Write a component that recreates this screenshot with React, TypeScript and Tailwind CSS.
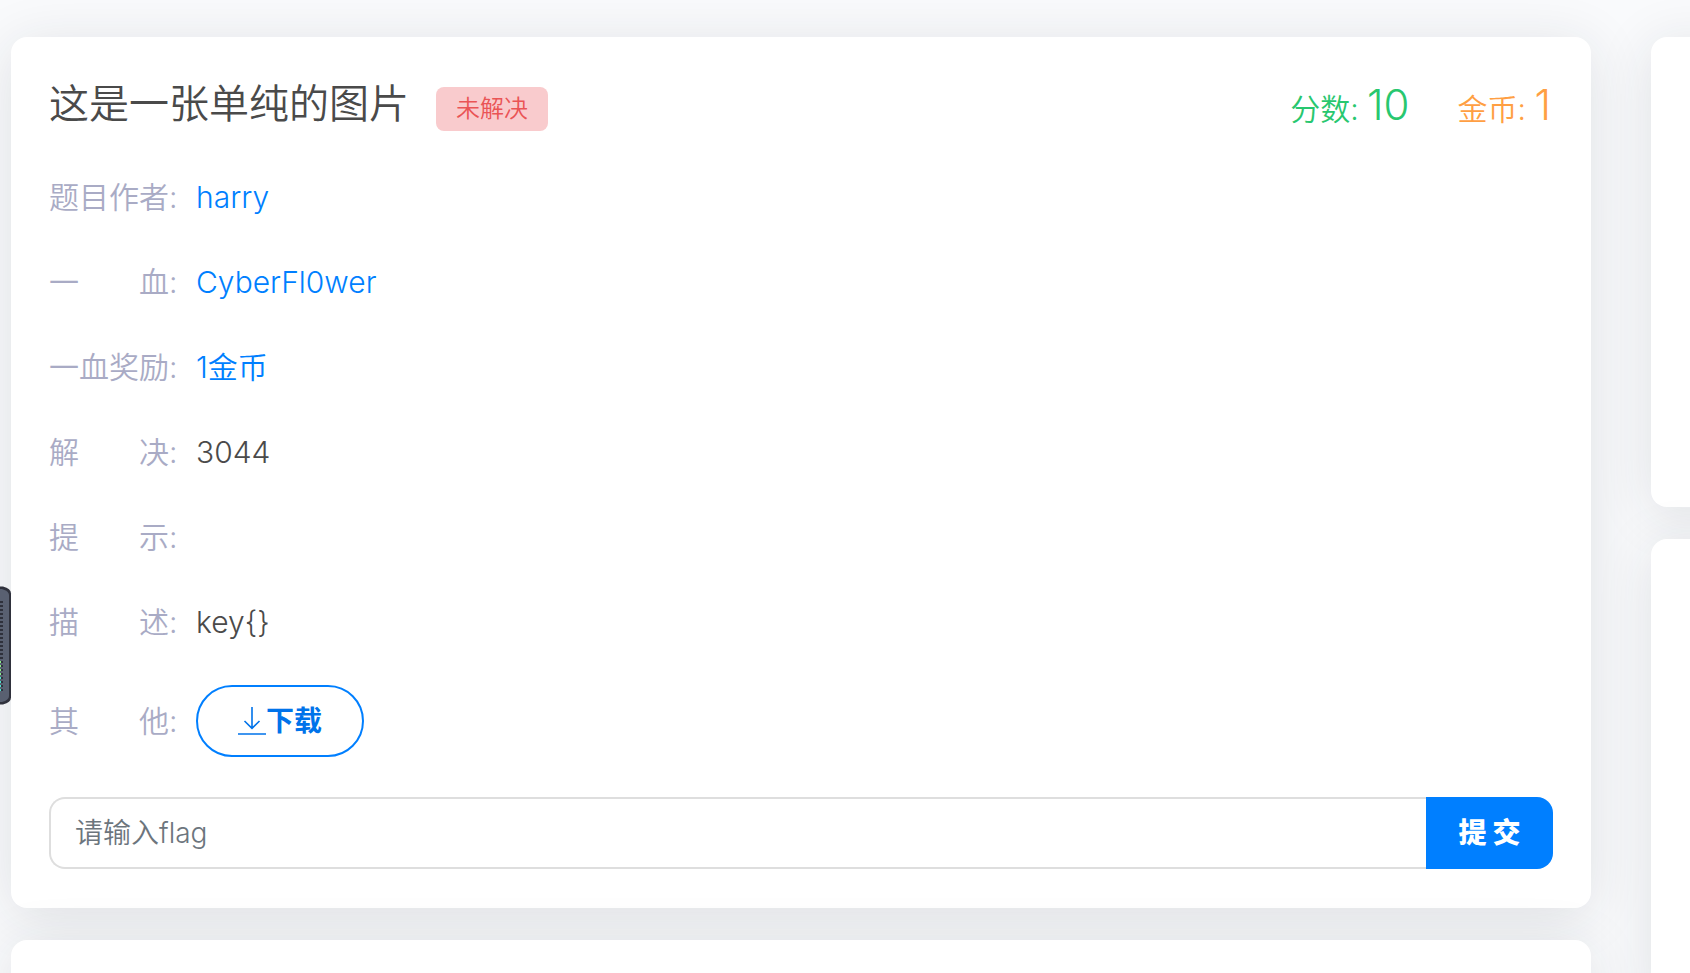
import type { ReactNode } from "react";

const cardClass =
  "rounded-2xl bg-white shadow-[0_8px_56px_rgba(34,41,47,0.12)]";

function Row({ label, children }: { label: string; children?: ReactNode }) {
  return (
    <div className="flex items-center gap-5">
      <dt className="w-[127px] shrink-0 whitespace-pre leading-[45px] text-[#a9abc5]">{label}:</dt>
      <dd className="leading-[45px]">{children}</dd>
    </div>
  );
}

function DownloadIcon() {
  return (
    <svg viewBox="0 0 28 28" className="size-7" fill="none" stroke="currentColor" strokeWidth="1.6" aria-hidden="true">
      <path d="M14 0v21M6.5 14l7.5 7.3 7.5-7.3M0 27h28" />
    </svg>
  );
}

function SideWidget() {
  const ticks = Array.from({ length: 23 }, (_, i) => i);
  return (
    <svg viewBox="0 0 12 120" className="absolute left-0 top-[586px] h-[120px] w-3" aria-hidden="true">
      <path d="M0 .5h3q8 2 8 7v104q0 5-8 7H0z" fill="#2f313c" />
      <path d="M0 3h2q7 2 7 6v101q0 4-7 6H0z" fill="#596071" />
      {ticks.map((i) => (
        <rect key={i} x="0" y={15 + i * 4} width="3" height="2" fill="#2f313c" />
      ))}
      {[0, 1, 2, 3, 4, 5, 6, 7].map((i) => (
        <rect key={i} x="0" y={75 + i * 4} width="1" height="2" fill={i < 4 ? "#8df08a" : "#4fe3d0"} />
      ))}
    </svg>
  );
}

export default function App() {
  return (
    <div className="relative min-h-screen overflow-hidden bg-[#f9fafc] font-['Inter','Noto_Sans_CJK_SC',sans-serif] font-[350] text-[#4a4a4a]">
      <div className="flex h-screen gap-15 pl-[11px] pt-[37px]">
        <main className="flex min-w-0 flex-1 flex-col gap-8">
          <section className={`${cardClass} px-[38px] pb-[39px] pt-[35px]`}>
            <header className="flex items-center justify-between">
              <div className="flex items-center gap-[27px]">
                <h1 className="text-[40px] leading-[60px]">这是一张单纯的图片</h1>
                <span className="mt-2.5 rounded-lg bg-[#f9cbcd] px-5 text-2xl leading-[44px] text-[#ea5455]">未解决</span>
              </div>
              <div className="mt-1.5 flex gap-12 pr-0.5 text-[30px] leading-[54px]">
                <p className="text-[#28c76f]">
                  分数: <span className="text-[42px]">10</span>
                </p>
                <p className="text-[#ff9f43]">
                  金币: <span className="text-[42px]">1</span>
                </p>
              </div>
            </header>
            <dl className="mt-[39px] flex flex-col gap-10 text-[30px]">
              <Row label="题目作者">
                <a href="#author" className="text-[#007fff]">harry</a>
              </Row>
              <Row label="一　　血">
                <a href="#first" className="text-[#007fff]">CyberFl0wer</a>
              </Row>
              <Row label="一血奖励">
                <span className="text-[#007fff]">1金币</span>
              </Row>
              <Row label="解　　决">3044</Row>
              <Row label="提　　示" />
              <Row label="描　　述">key{"{}"}</Row>
              <Row label="其　　他">
                <button
                  type="button"
                  className="flex h-[72px] items-center rounded-full border-2 border-[#007fff] px-10 text-[28px] font-bold text-[#0073ea]"
                >
                  <DownloadIcon />
                  下载
                </button>
              </Row>
            </dl>
            <form className="mt-10 flex h-[72px] text-[28px]" onSubmit={(e) => e.preventDefault()}>
              <input
                type="text"
                aria-label="flag"
                placeholder="请输入flag"
                className="min-w-0 flex-1 rounded-l-2xl border-2 border-r-0 border-[#dedede] bg-white px-6 outline-none placeholder:text-[#6c757d]"
              />
              <button type="submit" className="w-[127px] rounded-r-2xl bg-[#007fff] font-extrabold text-white">
                提 交
              </button>
            </form>
          </section>
          <section className={`${cardClass} -mb-10 flex-1`} />
        </main>
        <aside className="-mr-10 flex w-[79px] shrink-0 flex-col gap-8">
          <section className={`${cardClass} h-[470px]`} />
          <section className={`${cardClass} -mb-10 flex-1`} />
        </aside>
      </div>
      <SideWidget />
    </div>
  );
}
